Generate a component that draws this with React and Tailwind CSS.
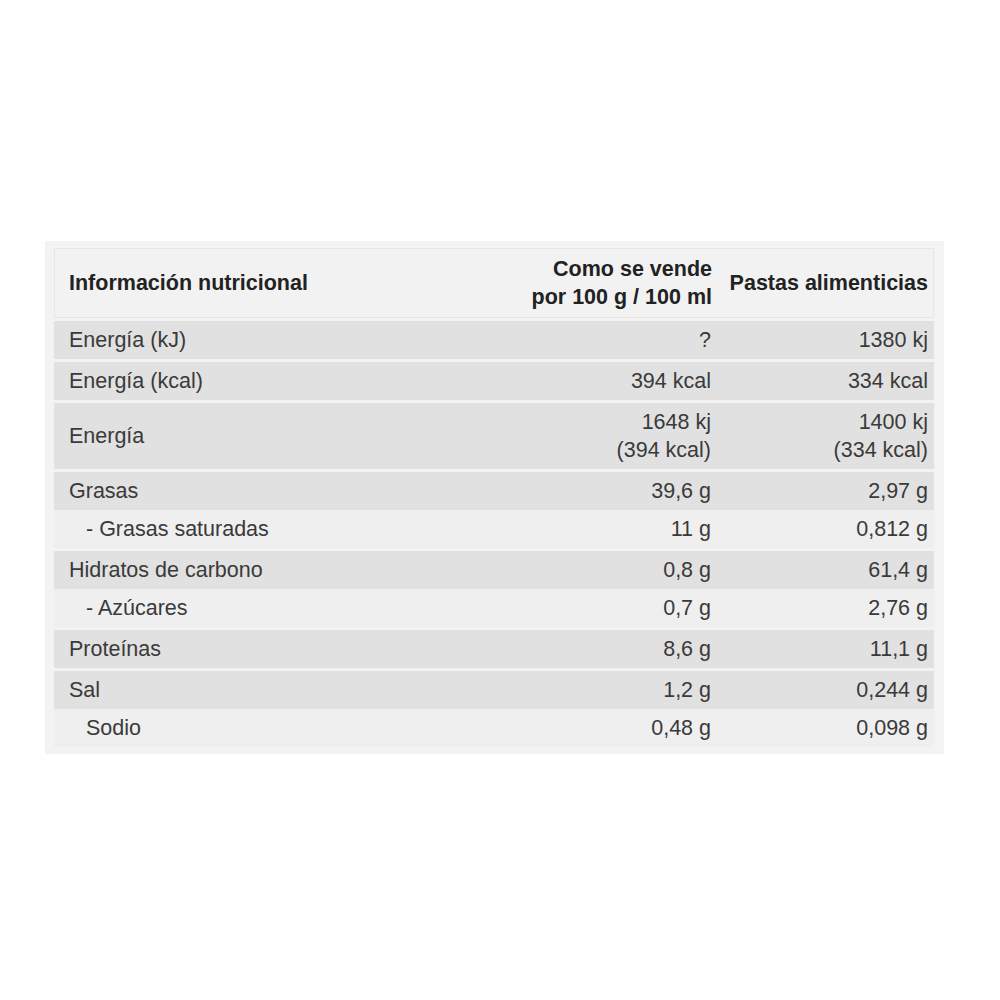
const ROWS = [
  [{ label: "Energía (kJ)", a: "?", b: "1380 kj" }],
  [{ label: "Energía (kcal)", a: "394 kcal", b: "334 kcal" }],
  [{ label: "Energía", a: ["1648 kj", "(394 kcal)"], b: ["1400 kj", "(334 kcal)"] }],
  [
    { label: "Grasas", a: "39,6 g", b: "2,97 g" },
    { label: "- Grasas saturadas", a: "11 g", b: "0,812 g", sub: true },
  ],
  [
    { label: "Hidratos de carbono", a: "0,8 g", b: "61,4 g" },
    { label: "- Azúcares", a: "0,7 g", b: "2,76 g", sub: true },
  ],
  [{ label: "Proteínas", a: "8,6 g", b: "11,1 g" }],
  [
    { label: "Sal", a: "1,2 g", b: "0,244 g" },
    { label: "Sodio", a: "0,48 g", b: "0,098 g", sub: true },
  ],
];

const Val = ({ v }) =>
  Array.isArray(v) ? (
    <div className="flex flex-col items-end">
      {v.map((x) => (
        <span key={x}>{x}</span>
      ))}
    </div>
  ) : (
    <span>{v}</span>
  );

const Row = ({ r }) => (
  <div
    className={`grid grid-cols-[363px_300px_217px] items-center py-[5px] ${
      r.sub ? "bg-[#efefef]" : "bg-[#e1e1e1]"
    }`}
  >
    <div className={r.sub ? "pl-[32px]" : "pl-[15px]"}>{r.label}</div>
    <div className="text-right pr-[6px]">
      <Val v={r.a} />
    </div>
    <div className="text-right pr-[6px]">
      <Val v={r.b} />
    </div>
  </div>
);

export default function App() {
  return (
    <div className="min-h-screen bg-white pt-[241px] pl-[45px]" style={{ fontFamily: '"Liberation Sans", Arial, sans-serif' }}>
      <div className="w-[899px] bg-[#f3f3f3] pt-[7px] pb-[7px] pl-[9px] pr-[10px] text-[21.5px] leading-[28px] text-[#3a3a3a]">
        <div className="flex flex-col gap-[3px]">
          <div className="grid grid-cols-[362px_300px_216px] items-center h-[70px] bg-[#f2f2f2] border border-[#e6e6e6] font-bold text-[#222]">
            <div className="pl-[14px]">Información nutricional</div>
            <div className="text-right pr-[5px] flex flex-col items-end">
              <span>Como se vende</span>
              <span>por 100 g / 100 ml</span>
            </div>
            <div className="text-right pr-[5px]">Pastas alimenticias</div>
          </div>
          {ROWS.map((g, i) => (
            <div key={i} className="flex flex-col">
              {g.map((r) => (
                <Row key={r.label} r={r} />
              ))}
            </div>
          ))}
        </div>
      </div>
    </div>
  );
}
